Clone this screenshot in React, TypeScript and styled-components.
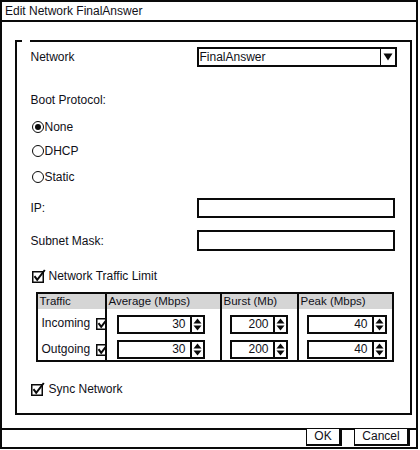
import React from "react";
import styled, { createGlobalStyle } from "styled-components";

const Global = createGlobalStyle`
  html, body { margin: 0; padding: 0; background: #fff; }
  body { font-family: "Liberation Sans", Arial, sans-serif; color: #101018; font-size: 12px; }
  * { box-sizing: border-box; }
`;

const INK = "#0a0a0a";

const Window = styled.div`
  width: 418px;
  height: 449px;
  border: 2px solid ${INK};
  display: flex;
  flex-direction: column;
  background: #fff;
`;

const TitleBar = styled.div`
  height: 20px;
  border-bottom: 2px solid ${INK};
  padding-left: 3px;
  line-height: 18px;
  font-size: 12px;
  white-space: nowrap;
`;

const Body = styled.div`
  flex: 1;
  display: flex;
  padding: 18px 4px 13px 13px;
`;

const GroupBox = styled.div`
  flex: 1;
  position: relative;
  border: 2.5px solid ${INK};
  display: flex;
  flex-direction: column;
  padding: 0 13px 0 13.5px;
  &::before {
    content: "";
    position: absolute;
    top: -2.5px;
    left: 5px;
    width: 8px;
    height: 2.5px;
    background: #fff;
  }
`;

const Row = styled.div<{ $mt: number; $h?: number }>`
  margin-top: ${(p) => p.$mt}px;
  height: ${(p) => p.$h ?? 16}px;
  display: grid;
  grid-template-columns: 166px 200px;
  align-items: center;
  white-space: nowrap;
`;

const Label = styled.span`
  font-size: 12px;
  line-height: 16px;
`;

const Select = styled.div`
  height: 20px;
  width: 200px;
  border: 2px solid ${INK};
  display: flex;
  align-items: stretch;
`;

const SelectText = styled.span`
  flex: 1;
  padding-left: 1px;
  line-height: 16px;
  font-size: 12px;
`;

const SelectArrow = styled.span`
  width: 15px;
  border-left: 1.5px solid ${INK};
  display: flex;
  align-items: center;
  justify-content: center;
`;

const TextField = styled.div<{ $h?: number }>`
  width: 198px;
  height: ${(p) => p.$h ?? 20}px;
  border: 2px solid ${INK};
`;

const Choice = styled.label`
  display: flex;
  align-items: center;
  gap: 1px;
  font-size: 12px;
  line-height: 16px;
  margin-left: 1px;
`;

const RadioCircle = styled.span<{ $on?: boolean }>`
  width: 12px;
  height: 12px;
  border-radius: 50%;
  border: 1.5px solid ${INK};
  display: flex;
  align-items: center;
  justify-content: center;
  &::after {
    content: "";
    width: 6px;
    height: 6px;
    border-radius: 50%;
    background: ${(p) => (p.$on ? INK : "transparent")};
  }
`;

const CheckRow = styled.label<{ $mt: number; $gap: number; $ml: number }>`
  margin-top: ${(p) => p.$mt}px;
  margin-left: ${(p) => p.$ml}px;
  height: 16px;
  display: flex;
  align-items: center;
  gap: ${(p) => p.$gap}px;
  font-size: 12px;
  white-space: nowrap;
`;

const Table = styled.div`
  margin-top: 8px;
  margin-left: 5px;
  width: 358px;
  border: 2px solid ${INK};
  display: grid;
  grid-template-columns: 67px 115px 77px 95px;
  grid-template-rows: 15px 26px 25px;
`;

const HeadCell = styled.div<{ $first?: boolean }>`
  background: #d5d5d5;
  border-left: ${(p) => (p.$first ? "none" : `2px solid ${INK}`)};
  padding-left: 2px;
  font-size: 11.5px;
  line-height: 15px;
  white-space: nowrap;
`;

const Cell = styled.div<{ $first?: boolean; $pl?: number }>`
  border-left: ${(p) => (p.$first ? "none" : `2px solid ${INK}`)};
  padding-left: ${(p) => p.$pl ?? 0}px;
  display: flex;
  align-items: flex-end;
  padding-bottom: 1px;
  overflow: hidden;
`;

const TrafficCell = styled.div`
  display: flex;
  align-items: center;
  padding-left: 4px;
  padding-top: 2px;
  overflow: hidden;
  font-size: 12px;
  white-space: nowrap;
`;

const TrafficCheck = styled.span`
  margin-left: auto;
  margin-right: -5px;
  display: flex;
`;

const Spinner = styled.div<{ $w: number }>`
  width: ${(p) => p.$w}px;
  height: 19px;
  display: flex;
`;

const SpinValue = styled.div`
  flex: 1;
  border: 2px solid ${INK};
  text-align: right;
  padding-right: 4px;
  font-size: 12px;
  line-height: 15px;
`;

const SpinArrows = styled.div`
  width: 13px;
  border: 2px solid ${INK};
  border-left: none;
  display: flex;
  align-items: center;
  justify-content: center;
`;

const ButtonBar = styled.div`
  height: 19px;
  border-top: 2px solid ${INK};
  display: flex;
  justify-content: flex-end;
  padding-right: 6px;
  gap: 12px;
`;

const Button = styled.div<{ $w: number }>`
  width: ${(p) => p.$w}px;
  margin-top: -2px;
  height: 18px;
  border: 1.5px solid ${INK};
  border-right: 3px solid ${INK};
  border-bottom: 2px solid ${INK};
  background: #fff;
  font-size: 12px;
  line-height: 15px;
  text-align: center;
`;

const CheckIcon = () => (
  <svg width="14" height="14" viewBox="0 0 14 14">
    <rect x="0.75" y="2.75" width="10.5" height="10.5" fill="#fff" stroke={INK} strokeWidth="1.5" />
    <path d="M2.5 7.2 L5.2 10.8 L12.8 1" fill="none" stroke={INK} strokeWidth="2" />
  </svg>
);

const DownTri = () => (
  <svg width="10" height="8" viewBox="0 0 10 8">
    <path d="M0.5 0.5 H9.5 L5 7.5 Z" fill={INK} />
  </svg>
);

const UpDown = () => (
  <svg width="9" height="13" viewBox="0 0 9 13">
    <path d="M0.5 5.5 L4.5 0.5 L8.5 5.5 Z" fill={INK} />
    <path d="M0.5 7.5 L4.5 12.5 L8.5 7.5 Z" fill={INK} />
  </svg>
);

const Spin = ({ value, w }: { value: string; w: number }) => (
  <Spinner $w={w}>
    <SpinValue>{value}</SpinValue>
    <SpinArrows>
      <UpDown />
    </SpinArrows>
  </Spinner>
);

export default function App() {
  return (
    <>
      <Global />
      <Window>
        <TitleBar>Edit Network FinalAnswer</TitleBar>
        <Body>
          <GroupBox>
            <Row $mt={5} $h={20}>
              <Label>Network</Label>
              <Select>
                <SelectText>FinalAnswer</SelectText>
                <SelectArrow>
                  <DownTri />
                </SelectArrow>
              </Select>
            </Row>
            <Row $mt={25}>
              <Label>Boot Protocol:</Label>
            </Row>
            <Row $mt={11}>
              <Choice>
                <RadioCircle $on />
                None
              </Choice>
            </Row>
            <Row $mt={8}>
              <Choice>
                <RadioCircle />
                DHCP
              </Choice>
            </Row>
            <Row $mt={10}>
              <Choice>
                <RadioCircle />
                Static
              </Choice>
            </Row>
            <Row $mt={13} $h={20}>
              <Label>IP:</Label>
              <TextField />
            </Row>
            <Row $mt={12} $h={21}>
              <Label>Subnet Mask:</Label>
              <TextField $h={21} />
            </Row>
            <CheckRow $mt={17} $gap={3} $ml={1}>
              <CheckIcon />
              Network Traffic Limit
            </CheckRow>
            <Table>
              <HeadCell $first>Traffic</HeadCell>
              <HeadCell>Average (Mbps)</HeadCell>
              <HeadCell>Burst (Mb)</HeadCell>
              <HeadCell>Peak (Mbps)</HeadCell>

              <TrafficCell>
                Incoming
                <TrafficCheck>
                  <CheckIcon />
                </TrafficCheck>
              </TrafficCell>
              <Cell $pl={10}>
                <Spin value="30" w={88} />
              </Cell>
              <Cell $pl={8}>
                <Spin value="200" w={58} />
              </Cell>
              <Cell $pl={8}>
                <Spin value="40" w={80} />
              </Cell>

              <TrafficCell>
                Outgoing
                <TrafficCheck>
                  <CheckIcon />
                </TrafficCheck>
              </TrafficCell>
              <Cell $pl={10}>
                <Spin value="30" w={88} />
              </Cell>
              <Cell $pl={8}>
                <Spin value="200" w={58} />
              </Cell>
              <Cell $pl={8}>
                <Spin value="40" w={80} />
              </Cell>
            </Table>
            <CheckRow $mt={19} $gap={4} $ml={0}>
              <CheckIcon />
              Sync Network
            </CheckRow>
          </GroupBox>
        </Body>
        <ButtonBar>
          <Button $w={36}>OK</Button>
          <Button $w={56}>Cancel</Button>
        </ButtonBar>
      </Window>
    </>
  );
}
